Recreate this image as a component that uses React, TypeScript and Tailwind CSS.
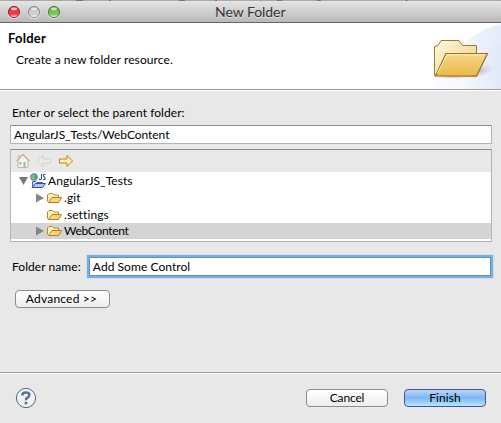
import React from "react";

const edge = "border border-[#b4b4b4] border-t-[#8c8c8c]";

function TrafficLight({ id, base, rim }: { id: string; base: string; rim: string }) {
  return (
    <svg width="14" height="14" viewBox="0 0 14 14" className="block">
      <defs>
        <linearGradient id={id} x1="0" y1="0" x2="0" y2="1">
          <stop offset="0" stopColor={rim} />
          <stop offset="0.45" stopColor={base} />
          <stop offset="0.7" stopColor={base} />
          <stop offset="1" stopColor="#fff" />
        </linearGradient>
      </defs>
      <circle cx="7" cy="7.5" r="6.3" fill="#efefef" />
      <circle cx="7" cy="7" r="5.6" fill={`url(#${id})`} stroke={rim} strokeWidth="1" />
      <ellipse cx="7" cy="3.8" rx="3" ry="1.5" fill="#fff" opacity="0.7" />
    </svg>
  );
}

function BigFolder() {
  return (
    <svg width="121" height="66" viewBox="380 23 121 66" className="block">
      <defs>
        <linearGradient id="sky" x1="0" y1="0" x2="1" y2="0">
          <stop offset="0" stopColor="#fff" />
          <stop offset="1" stopColor="#dfe6f9" />
        </linearGradient>
        <linearGradient id="back" x1="0" y1="0" x2="1" y2="1">
          <stop offset="0" stopColor="#fffbe4" />
          <stop offset="1" stopColor="#ecca76" />
        </linearGradient>
        <linearGradient id="front" x1="0" y1="0" x2="0" y2="1">
          <stop offset="0" stopColor="#f8d68a" />
          <stop offset="1" stopColor="#e8b944" />
        </linearGradient>
        <radialGradient id="shade">
          <stop offset="0" stopColor="#a58fa0" stopOpacity="0.55" />
          <stop offset="1" stopColor="#d8cfe0" stopOpacity="0" />
        </radialGradient>
      </defs>
      <path d="M425 89C449 73 457 33 501 24V89Z" fill="url(#sky)" opacity="0.8" />
      <path d="M451 89C470 76 474 49 501 44V89Z" fill="url(#sky)" opacity="0.6" />
      <ellipse cx="480" cy="71" rx="16" ry="7" fill="url(#shade)" transform="rotate(-15 480 71)" />
      <ellipse cx="452" cy="77" rx="23" ry="2" fill="url(#shade)" />
      <path d="M434.500 75.500V46.500L438 45.500L441 40.500H459L462.500 45.500H476.500V75.500Z" fill="url(#back)" stroke="#9b7d2a" />
      <path d="M435.500 76L446 53.500H487.500L476.500 76.200Z" fill="url(#front)" stroke="#94702a" strokeWidth="1.200" />
      <path d="M437.500 73L447 54.800H484" fill="none" stroke="#fff2bb" />
    </svg>
  );
}

function FolderIcon() {
  return (
    <svg width="16" height="12" viewBox="0 0 16 12" className="block shrink-0">
      <path d="M1.500 10.500L0.500 9.500V3L2 1.500H5.500L7 3H11.500V5.500" fill="#fff0b5" stroke="#c28427" />
      <path d="M1.500 10.500L5 5.500H14.500L11.500 10.500Z" fill="#fbd681" stroke="#b97a1c" />
    </svg>
  );
}

function ProjectIcon() {
  return (
    <svg width="17" height="16" viewBox="0 0 17 16" className="block shrink-0">
      <path d="M2.500 13.500V8.500H6L7 9.500H12.500V11" fill="#cfe3fb" stroke="#4460b4" />
      <path d="M2 14.500L5.500 10.500H15.500L12.500 14.500Z" fill="#a5cdf7" stroke="#2f4ba4" />
      <circle cx="4" cy="4" r="3.500" fill="#4f94b8" stroke="#6c8790" strokeWidth=".7" />
      <path d="M1 4L3 1.200L5 2.500L4 4L5.500 6L3 7Z" fill="#86bd6b" />
      <path d="M11.500 1V5.500Q10.500 7.500 9 6M15.500 1.500H14Q12.500 2.500 14 3.500T15 6.500H13" fill="none" stroke="#315673" strokeWidth="1.100" />
    </svg>
  );
}

function Row({ label, arrow, selected, text }: { label: string; arrow?: boolean; selected?: boolean; text: string }) {
  return (
    <div className={`flex items-center pl-[25px] ${selected ? "h-4 bg-[#d4d4d4]" : "h-[17px]"}`}>
      <svg width="8" height="10" viewBox="0 0 8 10" className="mr-[3px] block">
        {arrow && <path d="M0 0.500L8 5L0 9.500Z" fill="#858585" />}
      </svg>
      <FolderIcon />
      <span className={text}>{label}</span>
    </div>
  );
}

export default function App() {
  return (
    <div className="h-[423px] w-[501px] overflow-hidden bg-[#e8e8e8] font-['Lato','Lucida_Grande',sans-serif] text-[12px] leading-4 text-black [font-variant-ligatures:none]">
      <div className="flex h-px bg-[#aaa7a9] pl-[76px]">
        <i className="h-px w-[7px] bg-[#777]" />
        <i className="ml-[26px] h-px w-[2px] bg-[#777]" />
        <i className="ml-[68px] h-px w-[6px] bg-[#777]" />
        <i className="ml-[30px] h-px w-[2px] bg-[#777]" />
        <i className="ml-[60px] h-px w-[5px] bg-[#777]" />
        <i className="ml-[35px] h-px w-[4px] bg-[#777]" />
        <i className="ml-[85px] h-px w-px bg-[#444]" />
      </div>
      <header className="flex h-[22px] items-center rounded-t border-b border-[#666] bg-linear-to-b from-[#e5e5e5] to-[#b9b9b9] pl-[7px]">
        <div className="flex w-[54px] justify-between">
          <TrafficLight id="close" base="#ee3f48" rim="#a51e29" />
          <TrafficLight id="minimize" base="#cecece" rim="#8d8d8d" />
          <TrafficLight id="zoom" base="#72c957" rim="#437f38" />
        </div>
        <h1 className="ml-[154px] text-[14px] tracking-[-0.05px] text-[#333] [text-shadow:0_1px_#e4e4e4]">New Folder</h1>
      </header>
      <section className="flex h-[66px] justify-between bg-white">
        <div className="pl-2 pt-[7px]">
          <h2 className="text-[13px] font-bold tracking-[0.25px]">Folder</h2>
          <p className="ml-2 mt-[6px] tracking-[0.09px]">Create a new folder resource.</p>
        </div>
        <BigFolder />
      </section>
      <div className="h-[2px] border-b border-white bg-[#9b9b9b]" />
      <main className="h-[281px] px-[10px] pt-[14px]">
        <label className="ml-[2px] block h-[20px] tracking-[0.06px]">Enter or select the parent folder:</label>
        <div className={`h-[19px] w-[482px] bg-white pl-[3px] pt-px tracking-[-0.05px] ${edge}`}>AngularJS_Tests/WebContent</div>
        <div className={`mt-[5px] h-[93px] w-[482px] bg-white ${edge}`}>
          <div className="h-[22px] bg-[#e8e8e8]">
            <svg width="70" height="22" viewBox="0 0 70 22" className="block">
              <path d="M7 10V17.500H17V10L12 5Z" fill="#f4f3e6" stroke="#b9b9ac" />
              <path d="M5.500 11L12 4.500L18.500 11M8 8V5" fill="none" stroke="#c9b19f" strokeWidth="1.300" />
              <path d="M8.500 12H10.500V14.500H8.500ZM12.500 12H14.500V17H12.500Z" fill="#8fb9c0" />
              <path d="M26.500 11L32 5.500V9H39.500V13H32V16.500Z" fill="#ececec" stroke="#d0d0d0" />
              <path d="M61.500 11L56 5.500V9H48.500V13H56V16.500Z" fill="#fff0ae" stroke="#bd860c" />
            </svg>
          </div>
          <div className="flex h-[17px] items-center pl-[8px]">
            <svg width="9" height="8" viewBox="0 0 9 8" className="mr-[2px] block"><path d="M0 0H9L4.500 8Z" fill="#777" /></svg>
            <ProjectIcon />
            <span className="ml-[1px] tracking-[0.06px]">AngularJS_Tests</span>
          </div>
          <Row label=".git" arrow text="ml-px tracking-[0.1px]" />
          <Row label=".settings" text="ml-px tracking-[0.1px]" />
          <Row label="WebContent" arrow selected text="ml-px tracking-[-0.3px]" />
        </div>
        <div className="mt-[15px] flex items-center">
          <label className="ml-[2px] w-[77px] tracking-[0.06px]">Folder name:</label>
          <div className="h-[19px] w-[403px] border border-[#5593cf] bg-white pl-[3px] pt-px tracking-[0.06px] shadow-[0_0_1px_2px_#79aee1]">Add Some Control</div>
        </div>
        <button className="ml-[5px] mt-[14px] block h-[18px] w-[95px] rounded border border-[#8d8d8d] bg-linear-to-b from-white to-[#ededed] pr-[2px] leading-4 tracking-[0.2px]">Advanced &gt;&gt;</button>
      </main>
      <footer className="flex h-[51px] items-center border-t border-[#999] shadow-[inset_0_1px_white]">
        <svg width="22" height="22" viewBox="0 0 22 22" className="ml-[15px]">
          <circle cx="11" cy="11" r="9.600" fill="#f2f3f6" stroke="#536586" />
          <path d="M7.300 8.500Q7.300 5.500 11 5.500T14.300 8Q14.300 9.700 12.500 10.700T11 13.200" fill="none" stroke="#5b7097" strokeWidth="2.500" />
          <circle cx="11" cy="16" r="1.500" fill="#5b7097" />
        </svg>
        <button className="ml-[269px] h-[18px] w-[82px] rounded border border-[#8d8d8d] bg-linear-to-b from-white to-[#ededed] leading-4 tracking-[-0.15px]">Cancel</button>
        <button className="ml-[16px] h-[18px] w-[82px] rounded border border-[#494fa0] bg-linear-to-b from-[#b9d5f5] via-[#7db6f2] to-[#b7e7ff] leading-4 tracking-[0.08px]">Finish</button>
      </footer>
    </div>
  );
}
